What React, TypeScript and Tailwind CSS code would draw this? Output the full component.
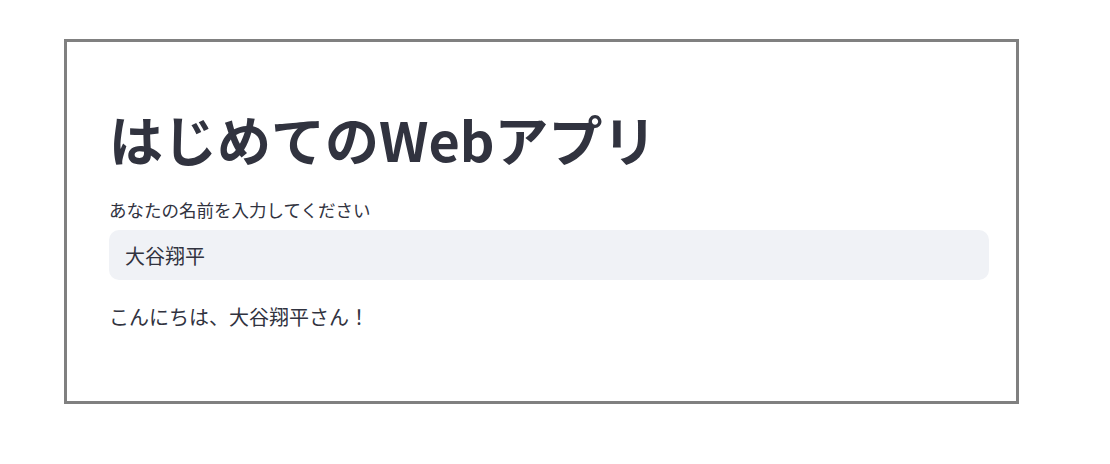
import React from 'react';

const font = { fontFamily: '"Noto Sans CJK JP", "Noto Sans", sans-serif' };

export default function App() {
    const name = '大谷翔平';

    return (
        <div className="w-[1110px] h-[464px] bg-white pt-[39px] pl-[64px]" style={font}>
            <div className="w-[955px] h-[365px] border-[3px] border-[#808080] pt-[64px] pl-[42px] pr-[27px] text-[#31333F]">
                <h1 className="text-[54px] leading-[66px] font-bold tracking-normal">はじめてのWebアプリ</h1>

                {/* 名前入力 */}
                <label className="block mt-[26px] text-[17.5px] leading-[24px]">あなたの名前を入力してください</label>
                <input
                    className="mt-[8px] block w-full h-[50px] rounded-[10px] bg-[#F0F2F6] px-4 text-[20px] text-[#31333F] outline-none"
                    defaultValue={name}
                    style={font}
                />

                <p className="mt-[21px] text-[20px] leading-[32px]">こんにちは、{name}さん！</p>
            </div>
        </div>
    );
}
